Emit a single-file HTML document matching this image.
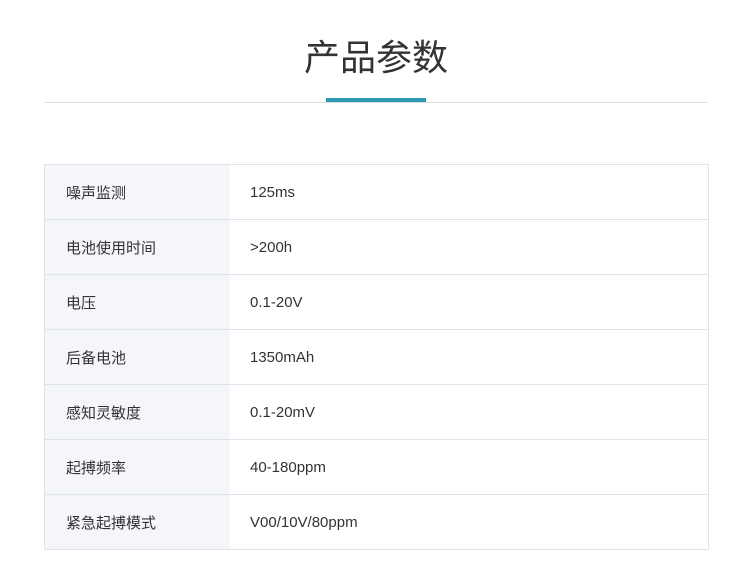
<!DOCTYPE html><html><head><meta charset="utf-8"><style>
body{margin:0;background:#fff;width:740px;height:574px;position:relative;font-family:"Liberation Sans","Noto Sans CJK SC",sans-serif;color:#333}
h1{position:absolute;top:36px;left:0;width:752px;margin:0;text-align:center;font-size:36px;font-weight:400;line-height:44px;color:#333}
.hr{position:absolute;left:44px;top:102px;width:664px;height:1px;background:#dde2e8}
.bar{position:absolute;left:326px;top:98px;width:100px;height:4px;background:#2e9bb0}
table{position:absolute;left:44px;top:164px;width:665px;border-collapse:collapse;font-size:15px}
td{border:1px solid #dfe3ea;height:53px;padding:1px 0 0;color:#333}
td:first-child{width:164px;background:#f5f6fa;padding-left:21px;border-right:none}
td:last-child{padding-left:20px;border-left:none}
</style></head><body>
<h1>产品参数</h1><div class="hr"></div><div class="bar"></div>
<table>
<tr><td>噪声监测</td><td>125ms</td></tr>
<tr><td>电池使用时间</td><td>&gt;200h</td></tr>
<tr><td>电压</td><td>0.1-20V</td></tr>
<tr><td>后备电池</td><td>1350mAh</td></tr>
<tr><td>感知灵敏度</td><td>0.1-20mV</td></tr>
<tr><td>起搏频率</td><td>40-180ppm</td></tr>
<tr><td>紧急起搏模式</td><td>V00/10V/80ppm</td></tr>
</table>
</body></html>
